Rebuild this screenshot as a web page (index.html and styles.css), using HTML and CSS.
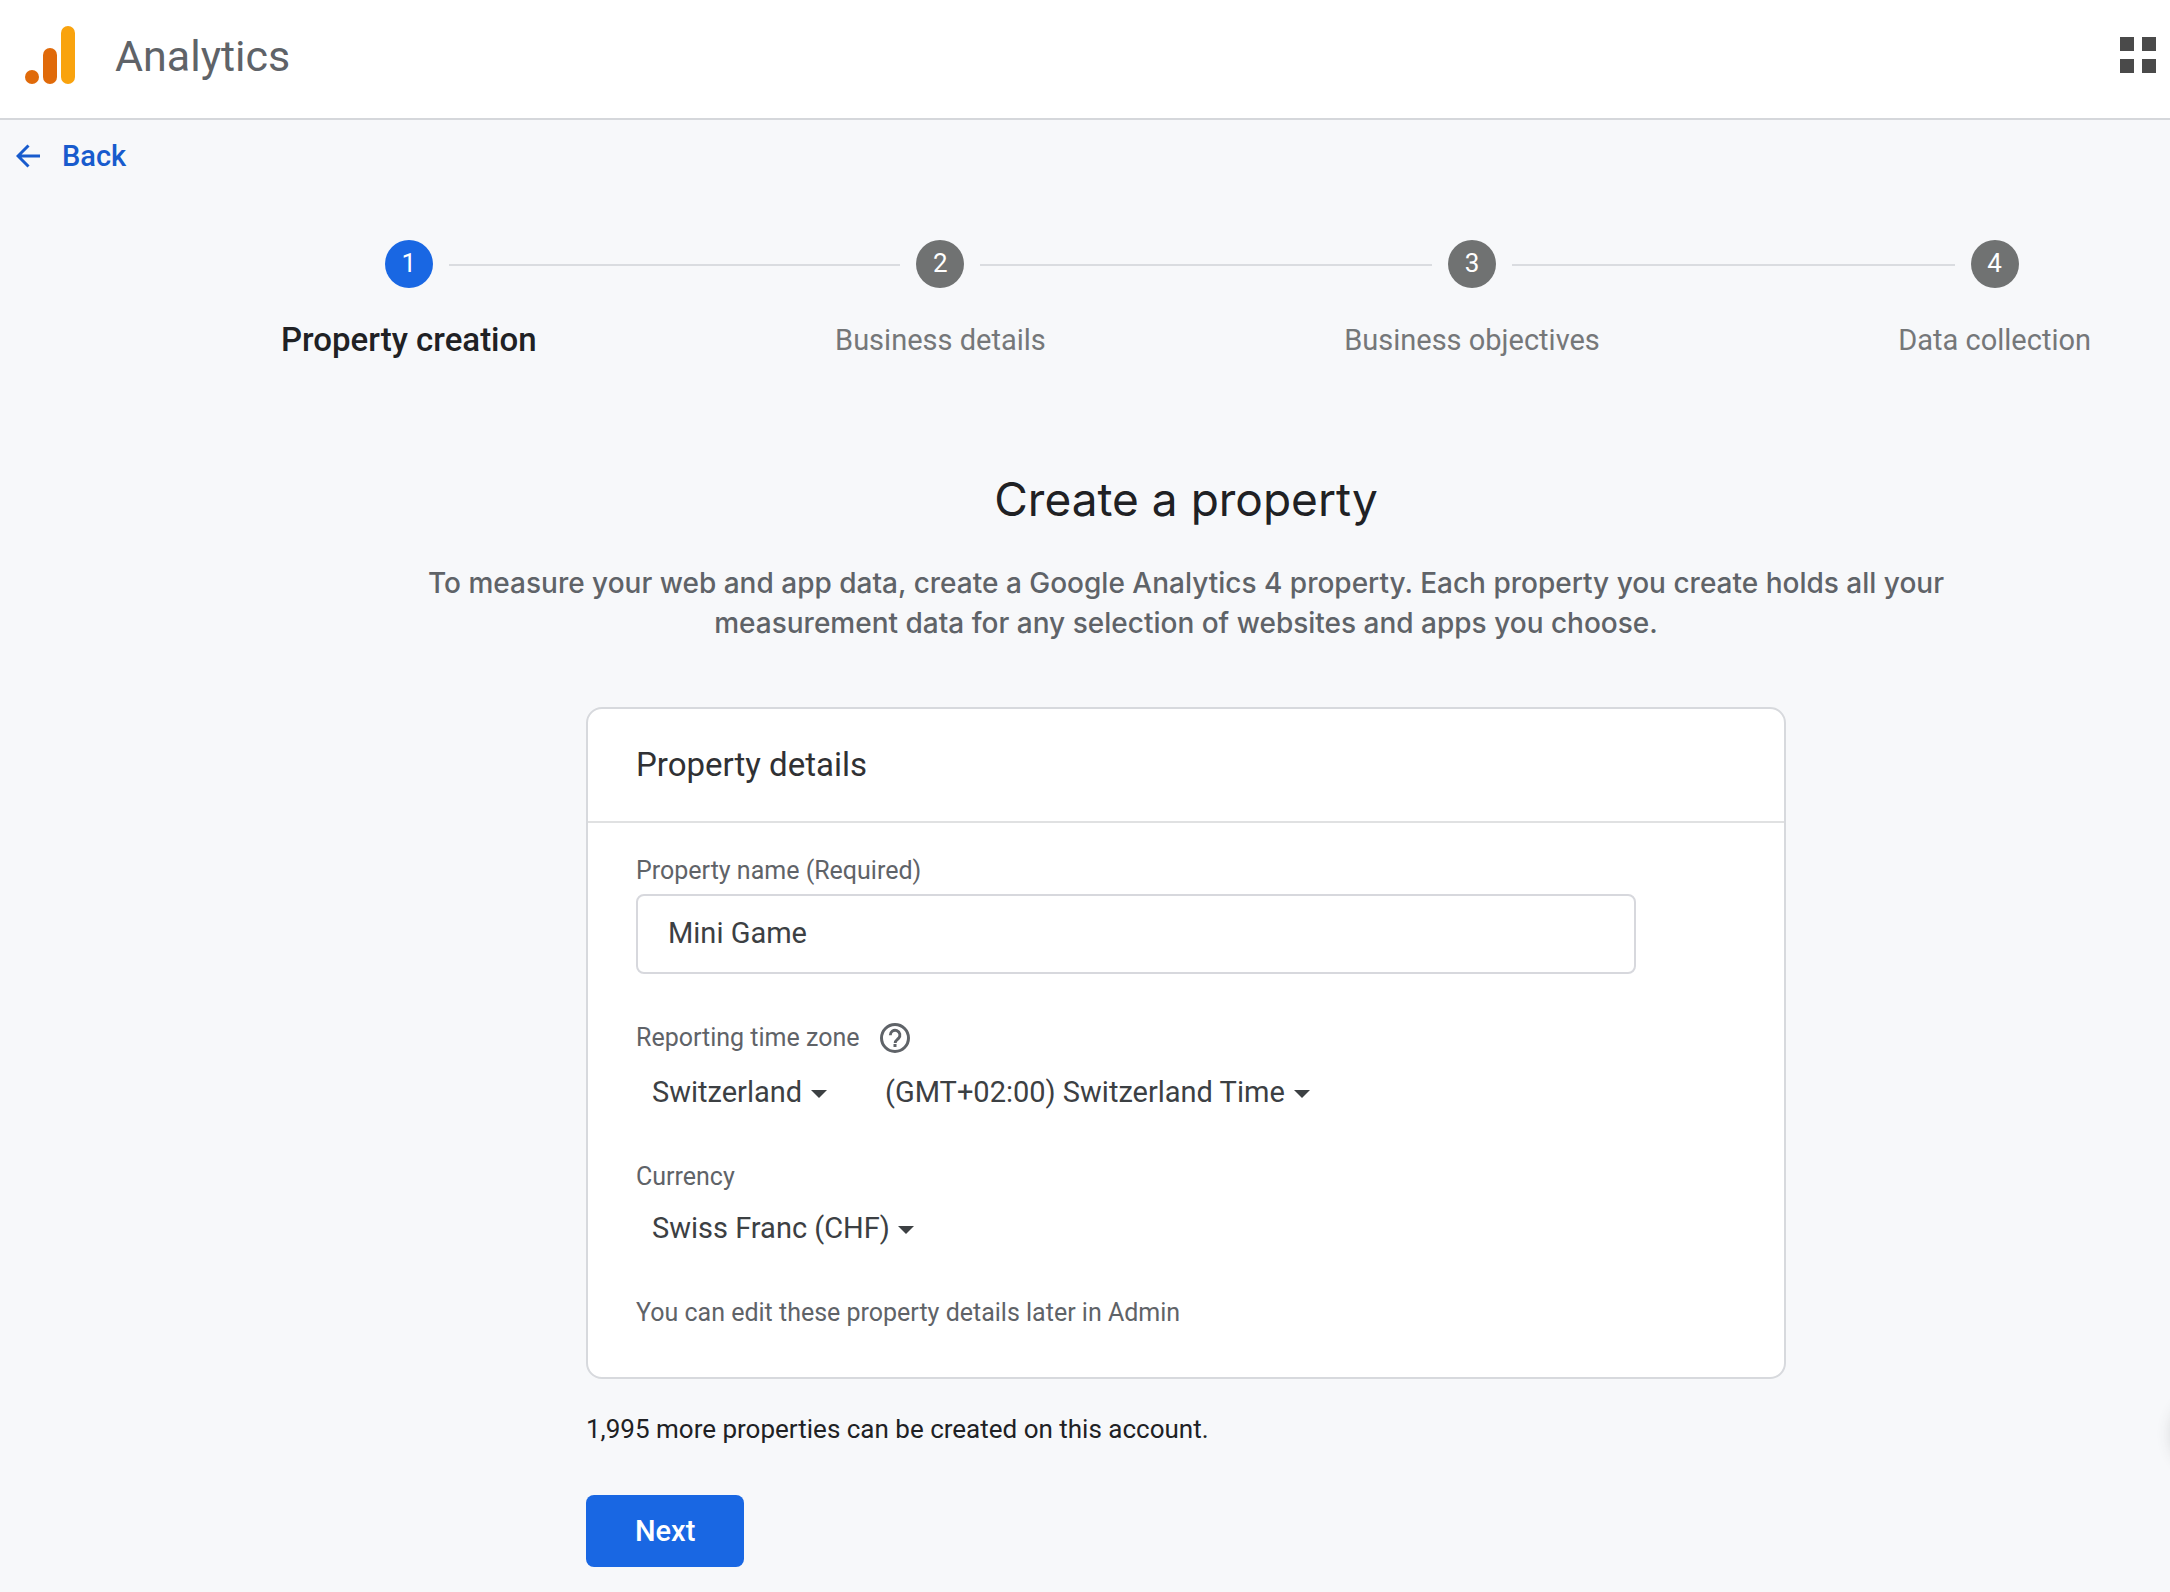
FILE: index.html
```html
<!DOCTYPE html>
<html lang="en">
<head>
  <meta charset="UTF-8">
  <meta name="viewport" content="width=device-width, initial-scale=1">
  <title>Analytics</title>
  <link rel="stylesheet" href="styles.css">
</head>
<body>
  <header class="topbar">
    <svg class="logo" viewBox="0 0 50 58" aria-hidden="true">
      <circle cx="7" cy="51" r="7" fill="#e06a0a"/>
      <rect x="18" y="22" width="14" height="36" rx="7" fill="#e06a0a"/>
      <rect x="36" y="0" width="14" height="58" rx="7" fill="#f9a30e"/>
    </svg>
    <span class="brand">Analytics</span>
    <button class="apps" type="button" aria-label="Apps">
      <svg viewBox="0 0 36 36" aria-hidden="true">
        <path d="M0 0h14v14H0zM22 0h14v14H22zM0 22h14v14H0zM22 22h14v14H22z" fill="#4a4a4a"/>
      </svg>
    </button>
  </header>

  <a class="back" href="#">
    <svg viewBox="0 0 24 24" aria-hidden="true">
      <path d="M24 12H2M12.500 1.500L2 12l10.500 10.500" fill="none" stroke="#185bcd" stroke-width="3"/>
    </svg>
    <span>Back</span>
  </a>

  <main class="content">
    <ol class="stepper">
      <li class="step active">
        <div class="step-head"><span class="step-number">1</span></div>
        <span class="step-label">Property creation</span>
      </li>
      <li class="connector" aria-hidden="true"></li>
      <li class="step">
        <div class="step-head"><span class="step-number">2</span></div>
        <span class="step-label">Business details</span>
      </li>
      <li class="connector" aria-hidden="true"></li>
      <li class="step">
        <div class="step-head"><span class="step-number">3</span></div>
        <span class="step-label">Business objectives</span>
      </li>
      <li class="connector" aria-hidden="true"></li>
      <li class="step">
        <div class="step-head"><span class="step-number">4</span></div>
        <span class="step-label">Data collection</span>
      </li>
    </ol>

    <h1>Create a property</h1>
    <p class="intro">To measure your web and app data, create a Google Analytics 4 property. Each property you create holds all your<br>measurement data for any selection of websites and apps you choose.</p>

    <form class="property-form">
      <section class="card">
        <h2>Property details</h2>
        <div class="card-body">
          <label class="label" for="name">Property name (Required)</label>
          <input class="name" id="name" type="text" value="Mini Game">

          <div class="label-row">
            <label class="label" for="country">Reporting time zone</label>
            <svg class="help" viewBox="0 0 30 30" aria-hidden="true">
              <circle cx="15" cy="15" r="13.500" fill="none" stroke="#5f6368" stroke-width="3"/>
              <path d="M10.300 12.200a4.800 4.800 0 1 1 8.200 3.200c-1.900 1.700-3.300 2.300-3.300 4.600" fill="none" stroke="#5f6368" stroke-width="2.900"/>
              <rect x="13.500" y="21" width="3" height="3" fill="#5f6368"/>
            </svg>
          </div>
          <div class="selects">
            <span class="select">
              <select id="country"><option>Switzerland</option></select>
            </span>
            <span class="select">
              <select aria-label="Time zone"><option>(GMT+02:00) Switzerland Time</option></select>
            </span>
          </div>

          <label class="label currency-label" for="currency">Currency</label>
          <div class="selects currency">
            <span class="select">
              <select id="currency"><option>Swiss Franc (CHF)</option></select>
            </span>
          </div>

          <p class="note">You can edit these property details later in Admin</p>
        </div>
      </section>
      <p class="quota">1,995 more properties can be created on this account.</p>
      <button class="next" type="button">Next</button>
    </form>
  </main>

  <button class="feedback" type="button" aria-label="Feedback"></button>
</body>
</html>
```
FILE: styles.css
```css
* {
  box-sizing: border-box;
}

body {
  margin: 0;
  min-height: 100vh;
  background: #f7f8fa;
  color: #202124;
  font-family: Roboto, Arial, sans-serif;
  font-size: 29px;
}

h1, h2, p, ol {
  margin: 0;
  padding: 0;
  font-weight: 400;
}

button {
  border: 0;
  padding: 0;
  font-family: inherit;
  cursor: pointer;
}

svg {
  display: block;
  flex: none;
}

/* Top bar */
.topbar {
  display: flex;
  align-items: center;
  height: 120px;
  padding: 0 14px 8px 25px;
  background: #fff;
  border-bottom: 2px solid #d5d7db;
}

.logo {
  width: 50px;
  height: 58px;
}

.brand {
  margin-left: 40px;
  padding-top: 2px;
  color: #5f6368;
  font-size: 43px;
}

.apps {
  margin-left: auto;
  background: none;
}

.apps svg {
  width: 36px;
  height: 36px;
}

.back {
  display: inline-flex;
  align-items: center;
  gap: 22px;
  margin: 16px 16px 0;
  height: 40px;
  color: #185bcd;
  font-weight: 500;
  text-decoration: none;
}

.back svg {
  width: 24px;
  height: 24px;
}

.content {
  padding: 64px 0 20px 202px;
}

/* Stepper */
.stepper {
  display: flex;
  padding: 0 79px;
  list-style: none;
}

.step-head {
  display: flex;
  align-items: center;
  gap: 16px;
  height: 48px;
}

.step-head::before,
.step-head::after {
  content: "";
  flex: 1;
  height: 2px;
  margin-top: 2px;
  background: #dadce0;
}

.step:first-child .step-head::before,
.step:last-child .step-head::after {
  background: none;
}

.connector {
  flex: 1;
  height: 2px;
  margin-top: 24px;
  background: #dadce0;
}

.step-number {
  width: 48px;
  height: 48px;
  border-radius: 50%;
  background: #707272;
  color: #fff;
  font-size: 26px;
  line-height: 46px;
  text-align: center;
}

.step-label {
  display: block;
  margin-top: 32px;
  color: #757779;
  line-height: 40px;
}

.active .step-number {
  background: #1967e3;
}

.active .step-label {
  color: #202124;
  font-size: 33px;
  font-weight: 500;
}

h1 {
  margin-top: 111px;
  font-family: Inter, Roboto, sans-serif;
  font-size: 46px;
  line-height: 56px;
  text-align: center;
}

.intro {
  margin-top: 36px;
  color: #5f6368;
  font-family: Inter, Roboto, sans-serif;
  font-size: 28px;
  font-weight: 500;
  line-height: 40px;
  text-align: center;
}

/* Property form */
.property-form {
  max-width: 1200px;
  margin: 64px auto 0;
}

.card {
  background: #fff;
  border: 2px solid #d7d9dd;
  border-radius: 16px;
}

h2 {
  padding: 0 48px;
  border-bottom: 2px solid #e0e1e2;
  color: #303134;
  font-size: 33px;
  line-height: 112px;
}

.card-body {
  padding: 32px 48px 48px;
}

.label,
.note {
  display: block;
  color: #5f6368;
  font-size: 25px;
  line-height: 32px;
}

.name {
  display: block;
  width: 100%;
  max-width: 1000px;
  height: 80px;
  margin-top: 7px;
  padding: 0 30px 2px;
  border: 2px solid #d7d8dd;
  border-radius: 8px;
  background: #fff;
  color: #3c4043;
  font-family: inherit;
  font-size: 29px;
}

.label-row {
  display: flex;
  align-items: center;
  gap: 20px;
  margin-top: 48px;
}

.help {
  width: 30px;
  height: 30px;
}

.selects {
  display: flex;
  gap: 58px;
  margin-top: 14px;
  padding-left: 16px;
}

.select {
  position: relative;
}

.select::after {
  content: "";
  position: absolute;
  right: 0;
  top: 22px;
  border: 8px solid transparent;
  border-top-color: #3c4043;
  border-bottom: 0;
  pointer-events: none;
}

select {
  display: block;
  height: 48px;
  padding: 0 24px 0 0;
  border: 0;
  background: none;
  appearance: none;
  color: #3c4043;
  font-family: inherit;
  font-size: 29px;
}

.currency-label {
  margin-top: 45px;
}

.currency {
  margin-top: 11px;
}

.note {
  margin-top: 45px;
}

.quota {
  margin-top: 34px;
  font-size: 26px;
  line-height: 32px;
}

.next {
  height: 72px;
  margin-top: 50px;
  padding: 0 49px;
  border-radius: 8px;
  background: #1967e3;
  color: #fff;
  font-size: 29px;
  font-weight: 500;
}

/* Tucked past the right edge, only its shadow shows */
.feedback {
  position: fixed;
  right: -82px;
  bottom: 120px;
  width: 80px;
  height: 80px;
  border-radius: 50%;
  background: #fff;
  box-shadow: 0 2px 16px rgba(60, 64, 67, 0.2);
}
```
